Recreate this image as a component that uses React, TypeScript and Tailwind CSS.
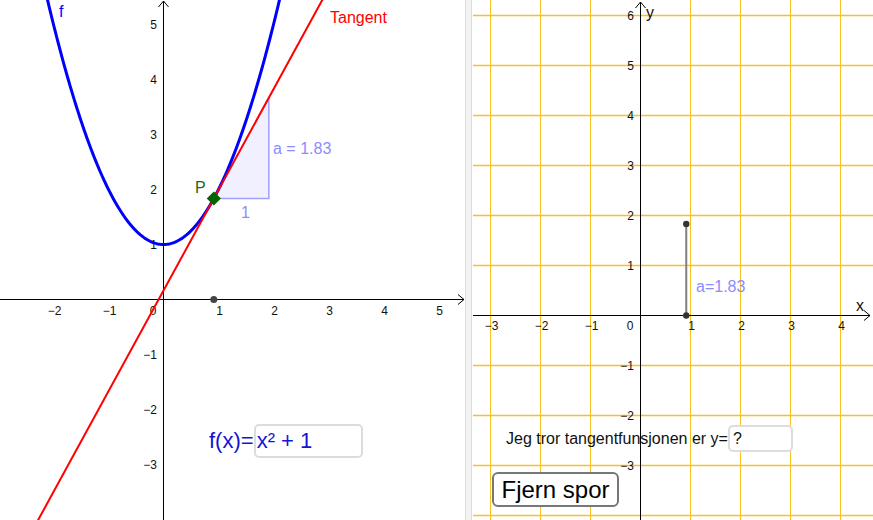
import React from "react";

const FONT = '"Liberation Sans", Arial, sans-serif';

function LeftGraph() {
  const ox = 163.5;
  const oy = 299.5;
  const u = 55;
  const sx = (t: number) => ox + t * u;
  const sy = (v: number) => oy - v * u;
  const pts: string[] = [];
  for (let t = -2.2; t <= 2.2; t += 0.02) {
    pts.push(`${sx(t).toFixed(2)},${sy(t * t + 1).toFixed(2)}`);
  }
  const px = 0.915;
  const py = px * px + 1;
  const a = 1.83;
  const tan = (t: number) => a * (t - px) + py;
  const xLabels = [-2, -1, 1, 2, 3, 4, 5];
  const yLabels = [5, 4, 3, 2, 1, -1, -2, -3];
  return (
    <svg width="465" height="520" className="absolute left-0 top-0" style={{ fontFamily: FONT }}>
      <rect x="0" y="299" width="464" height="1" fill="#000" />
      <polyline points={`458,294.5 464,299.5 458,304.5`} fill="none" stroke="#000" strokeWidth="1" />
      <rect x="163" y="1" width="1" height="519" fill="#000" />
      <polyline points={`158.5,7 163.5,1 168.5,7`} fill="none" stroke="#000" strokeWidth="1" />
      {xLabels.map((k) => (
        <text key={k} x={sx(k) + 1} y="315" fontSize="12" textAnchor="middle" fill="#111">
          {k < 0 ? `\u2212${-k}` : k}
        </text>
      ))}
      <text x="153" y="315" fontSize="12" textAnchor="middle" fill="#111">0</text>
      {yLabels.map((k) => (
        <text key={k} x="157" y={sy(k) + 4} fontSize="12" textAnchor="end" fill="#111">
          {k < 0 ? `\u2212${-k}` : k}
        </text>
      ))}
      <polygon
        points={`${sx(px)},${sy(py)} ${sx(px + 1)},${sy(py)} ${sx(px + 1)},${sy(py + a)}`}
        fill="#f0f0ff"
        stroke="#a0a0ff"
        strokeWidth="1.5"
      />
      <polyline points={pts.join(" ")} fill="none" stroke="#0000ff" strokeWidth="3" />
      <line x1={sx(-2.5)} y1={sy(tan(-2.5))} x2={sx(3)} y2={sy(tan(3))} stroke="#ff0000" strokeWidth="2" />
      <circle cx={sx(px)} cy={oy} r="3.5" fill="#444" />
      <rect
        x={sx(px) - 5}
        y={sy(py) - 5}
        width="10"
        height="10"
        fill="#006400"
        transform={`rotate(45 ${sx(px)} ${sy(py)})`}
      />
      <text x="195" y="193" fontSize="16" fill="#1d6b1d">P</text>
      <text x="273" y="154" fontSize="16" fill="#8c8cff">a = 1.83</text>
      <text x="241" y="218" fontSize="16" fill="#8c8cff">1</text>
      <text x="59" y="17" fontSize="16" fill="#0000ff">f</text>
      <text x="330" y="23" fontSize="16" fill="#ff0000">Tangent</text>
    </svg>
  );
}

function RightGraph() {
  const ox = 168.5;
  const oy = 315.5;
  const u = 50;
  const sx = (t: number) => ox + t * u;
  const sy = (v: number) => oy - v * u;
  const vx = [-3, -2, -1, 1, 2, 3, 4];
  const hy = [6, 5, 4, 3, 2, 1, -1, -2, -3, -4];
  const px = 0.915;
  const a = 1.83;
  return (
    <svg width="401" height="520" className="absolute left-0 top-0" style={{ fontFamily: FONT }}>
      {vx.map((k) => (
        <rect key={`v${k}`} x={sx(k) - 0.5} y="0" width="1" height="520" fill="#f8c020" />
      ))}
      {hy.map((k) => (
        <rect key={`h${k}`} x="1" y={sy(k) - 0.75} width="400" height="1.5" fill="#f8c020" />
      ))}
      <rect x="1" y="315" width="397" height="1" fill="#000" />
      <polyline points={`392,310.5 398,315.5 392,320.5`} fill="none" stroke="#000" strokeWidth="1" />
      <rect x="168" y="2" width="1" height="518" fill="#000" />
      <polyline points={`163.5,8 168.5,2 173.5,8`} fill="none" stroke="#000" strokeWidth="1" />
      {vx.map((k) => (
        <text key={`xl${k}`} x={sx(k) + 1} y="330" fontSize="12" textAnchor="middle" fill="#111">
          {k < 0 ? `\u2212${-k}` : k}
        </text>
      ))}
      <text x="158" y="330" fontSize="12" textAnchor="middle" fill="#111">0</text>
      {hy.slice(0, 9).map((k) => (
        <text key={`yl${k}`} x="162" y={sy(k) + 4} fontSize="12" textAnchor="end" fill="#111">
          {k < 0 ? `\u2212${-k}` : k}
        </text>
      ))}
      <text x="384" y="311" fontSize="16" fill="#111">x</text>
      <text x="174" y="18" fontSize="16" fill="#111">y</text>
      <line x1={sx(px)} y1={sy(0)} x2={sx(px)} y2={sy(a)} stroke="#808080" strokeWidth="2" />
      <circle cx={sx(px)} cy={sy(a)} r="3.2" fill="#333" />
      <circle cx={sx(px)} cy={sy(0)} r="3.2" fill="#333" />
      <text x="224" y="292" fontSize="16" fill="#8c8cff">a=1.83</text>
    </svg>
  );
}

export default function App() {
  return (
    <div
      className="flex w-[873px] h-[520px] overflow-hidden bg-white"
      style={{ fontFamily: FONT }}
    >
      <div className="relative w-[465px] h-full shrink-0 bg-white">
        <LeftGraph />
        <div className="absolute left-[209px] top-[424px] flex items-center h-[34px]">
          <span className="text-[22px] leading-none text-[#1414d2]">f(x)=</span>
          <div className="w-[109px] h-[34px] rounded-[5px] border-2 border-[#dcdcdc] bg-white flex items-center pl-[1px]">
            <span className="text-[22px] leading-none text-[#1414d2]">x² + 1</span>
          </div>
        </div>
      </div>
      <div className="w-[7px] h-full shrink-0 bg-[#f3f3f3] border-x border-[#dddddd]" />
      <div className="relative flex-1 h-full bg-white">
        <RightGraph />
        <div className="absolute left-[34px] top-[425px] flex items-center h-[27px]">
          <span className="text-[16px] leading-none text-[#111]">Jeg tror tangentfunsjonen er y=</span>
          <div className="w-[65px] h-[27px] rounded-[5px] border-2 border-[#dddddd] bg-white flex items-center pl-[3px]">
            <span className="text-[16px] leading-none text-[#111]">?</span>
          </div>
        </div>
        <button className="absolute left-[20px] top-[472px] w-[127px] h-[35px] rounded-[6px] border-2 border-[#777777] bg-white flex items-center justify-center">
          <span className="text-[24px] leading-none text-black">Fjern spor</span>
        </button>
      </div>
    </div>
  );
}
